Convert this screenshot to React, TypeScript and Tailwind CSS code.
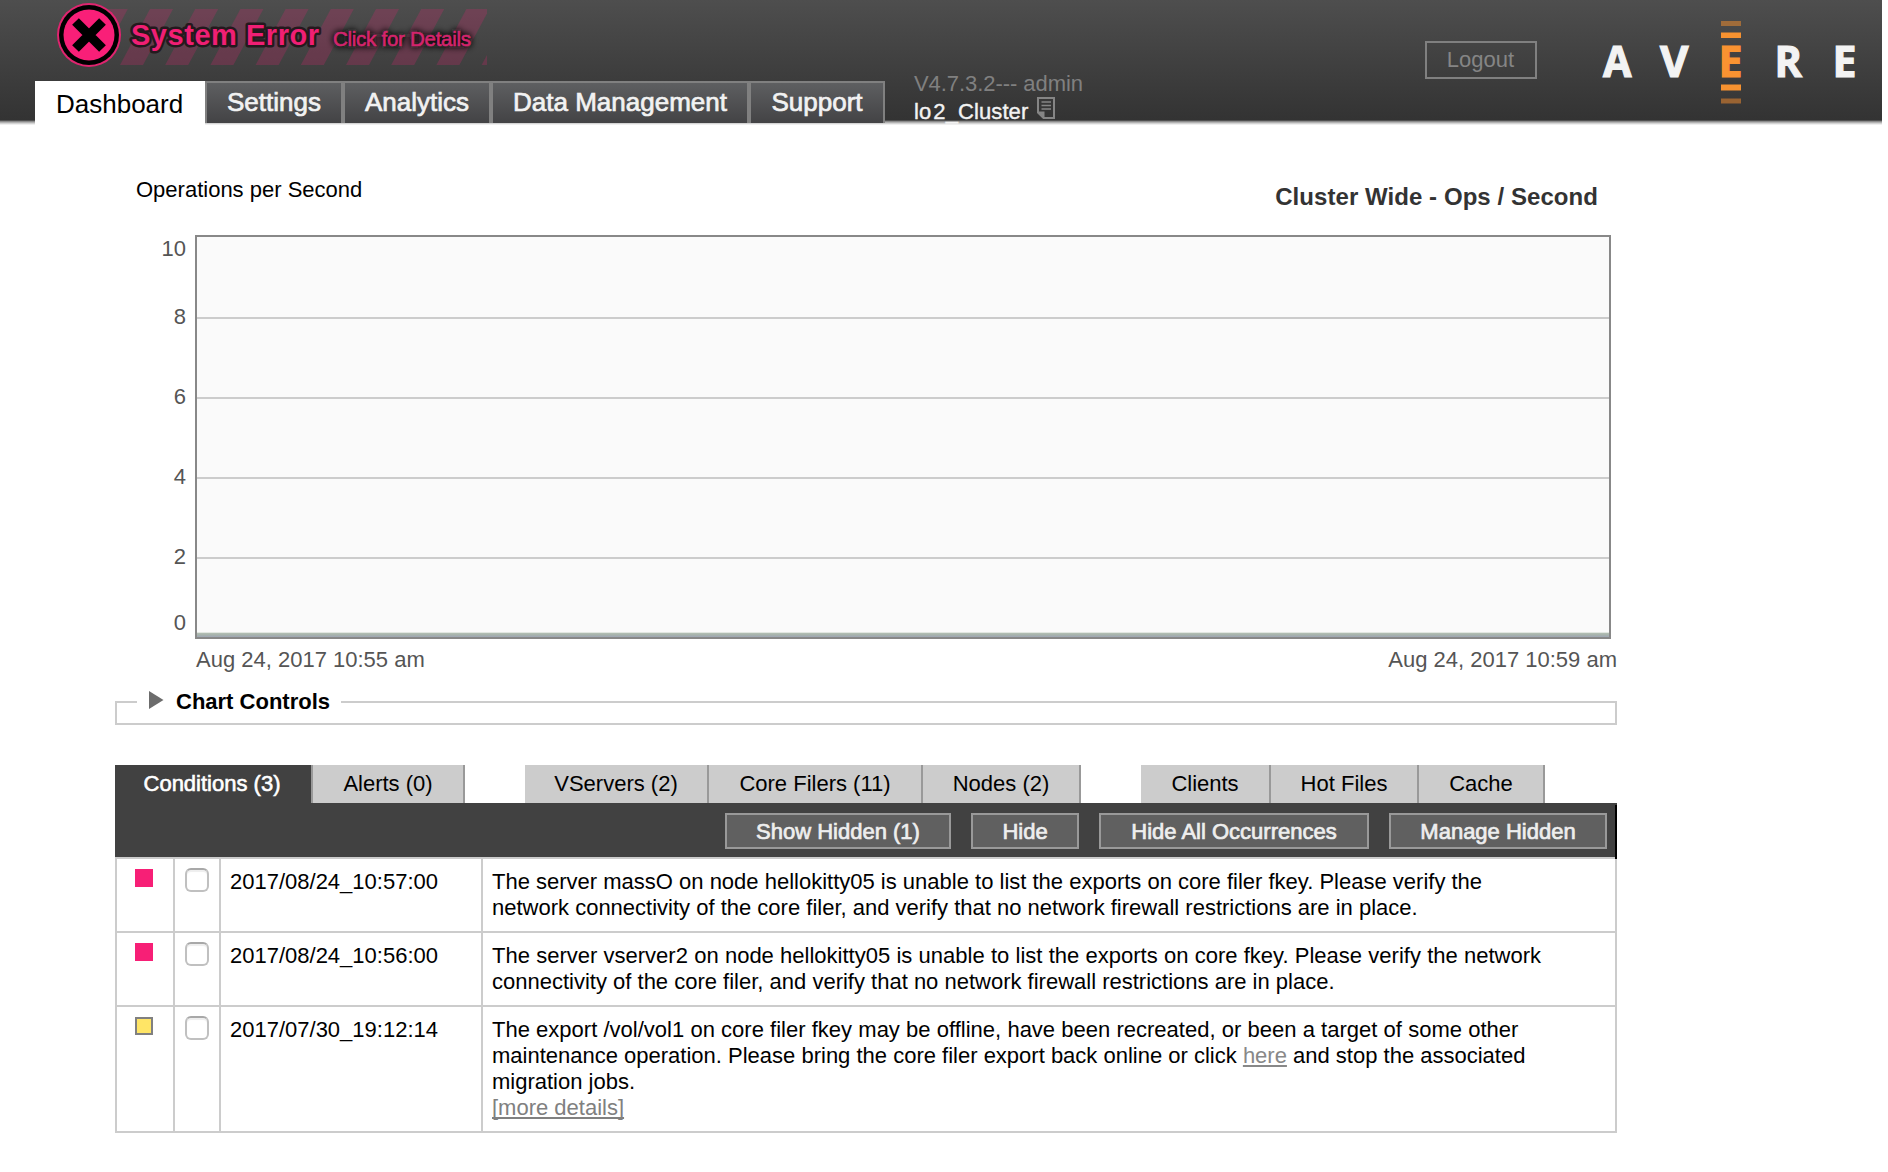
import React from "react";

const navTabs = [
  { label: "Settings", width: "w-[138px]" },
  { label: "Analytics", width: "w-[148px]" },
  { label: "Data Management", width: "w-[258px]" },
  { label: "Support", width: "w-[136px]" },
];

function ErrorBanner() {
  const stripes = [0, 1, 2, 3, 4, 5, 6, 7, 8, 9];
  return (
    <svg width="430" height="64" viewBox="57 3 430 64" className="block">
      <defs>
        <clipPath id="stripeClip">
          <rect x="100" y="9" width="387" height="56" />
        </clipPath>
        <filter id="glow" x="-20%" y="-60%" width="140%" height="220%">
          <feGaussianBlur stdDeviation="3" />
        </filter>
      </defs>
      <g clipPath="url(#stripeClip)" fill="#f91f78" fillOpacity="0.2">
        {stripes.map((i) => {
          const x = 74.8 + i * 45.2;
          return <polygon key={i} points={`${x},65 ${x + 23},65 ${x + 53},9 ${x + 30},9`} />;
        })}
      </g>
      <circle cx="89" cy="35" r="32" fill="#e0246f" />
      <circle cx="89" cy="35" r="30" fill="#000" />
      <circle cx="89" cy="35" r="25.5" fill="#f91f78" />
      <path d="M75.500 21.500 L102.500 48.500 M102.500 21.500 L75.500 48.500" stroke="#000" strokeWidth="9.500" />
      <g fontFamily="Liberation Sans, sans-serif">
        <text x="131" y="45" fontSize="29" fontWeight="700" textLength="188" fill="#f01f74" stroke="#25191e" strokeWidth="5" strokeLinejoin="round" paintOrder="stroke">System Error</text>
        <text x="333" y="46" fontSize="20.500" textLength="138" fill="#111" stroke="#111" strokeWidth="3" filter="url(#glow)" aria-hidden="true">Click for Details</text>
        <text x="333" y="46" fontSize="20.500" textLength="138" fill="#d4246d" stroke="#d4246d" strokeWidth="0.600">Click for Details</text>
      </g>
    </svg>
  );
}

function AvereLogo() {
  const letters = [
    { c: "A", x: 1603, w: 28.5 },
    { c: "V", x: 1660, w: 28.5 },
    { c: "R", x: 1774.5, w: 27.5 },
    { c: "E", x: 1832.5, w: 24 },
  ];
  return (
    <svg width="256" height="84" viewBox="1601 20 256 84" className="block">
      <g fontFamily="Open Sans, sans-serif" fontWeight="700" fontSize="43.500" fill="#f3f3f3" stroke="#f3f3f3" strokeWidth="1.200">
        {letters.map((l) => (
          <text key={l.x} x={l.x} y="76.500" textLength={l.w} lengthAdjust="spacingAndGlyphs">{l.c}</text>
        ))}
        <text x="1718.500" y="76.500" fill="#f99331" stroke="#f99331" textLength="24" lengthAdjust="spacingAndGlyphs">E</text>
      </g>
      <rect x="1721" y="21" width="20" height="5" fill="#a06c3a" />
      <rect x="1721" y="32.500" width="20" height="5.500" fill="#f79230" />
      <rect x="1721" y="84.500" width="20" height="6" fill="#f79230" />
      <rect x="1721" y="98.500" width="20" height="5" fill="#996332" />
    </svg>
  );
}

function Header() {
  return (
    <header className="flex h-[125px] w-[1882px] bg-[linear-gradient(to_bottom,#4e4e4e_0px,#333_120px,#505050_120px,#505050_121px,#8b8b8b_121px,#8b8b8b_122px,#b2b2b2_122px,#b2b2b2_123px,#d4d4d4_123px,#d4d4d4_124px,#efefef_124px)]">
      <div className="ml-[35px] w-[850px]">
        <div className="ml-[22px] h-[81px] pt-[3px]">
          <ErrorBanner />
        </div>
        <nav className="flex items-start text-[26px] leading-[30px]">
          <div className="h-[44px] w-[170px] bg-white pt-[8px] pl-[21px] text-black">Dashboard</div>
          {navTabs.map((t) => (
            <div key={t.label} className={`${t.width} h-[42px] border-2 border-b-0 border-[#808080] bg-gradient-to-b from-[#5e5f61] to-[#434345] pt-[4px] text-center whitespace-nowrap text-[#f2f2f2] [-webkit-text-stroke:0.7px_#f2f2f2]`}>
              {t.label}
            </div>
          ))}
        </nav>
      </div>
      <div className="ml-[29px] w-[300px] pt-[70px] text-[22px] leading-[27px] text-[#808080]">
        <div className="tracking-[-0.06px]">V4.7.3.2--- admin</div>
        <div className="flex items-start text-[#f2f2f2] [-webkit-text-stroke:0.4px_#f2f2f2]">
          <span className="w-[123px] pt-px tracking-[0.1px]">lo<span className="ml-[2px]">2_Cluster</span></span>
          <svg width="18" height="22" viewBox="0 0 18 22" fill="none" stroke="#858585" strokeWidth="2">
            <path d="M1 1h16v20H6.500L1 15.500z" />
            <path d="M1 15.500h5.500V21" fill="#858585" />
            <path d="M4.500 5h9.500M4.500 8.500h9.500M4.500 12h9.500" strokeWidth="1.500" />
          </svg>
        </div>
      </div>
      <button className="mt-[41px] ml-[211px] h-[38px] w-[112px] border-2 border-[#808080] pr-px text-center text-[22px] leading-[32px] text-[#858585]">Logout</button>
      <div className="mt-[20px] ml-[64px]">
        <AvereLogo />
      </div>
    </header>
  );
}

const yLabels = [
  { v: "10", h: "h-[68px]" },
  { v: "8", h: "h-[80px]" },
  { v: "6", h: "h-[80px]" },
  { v: "4", h: "h-[80px]" },
  { v: "2", h: "h-[66px]" },
  { v: "0", h: "h-[26px]" },
];

function Chart() {
  return (
    <section className="w-[1502px] text-[22px]">
      <div className="flex h-[110px] justify-between pt-[52px] pr-[19px] pl-[21px]">
        <h2 className="leading-[26px]">Operations per Second</h2>
        <h1 className="mt-[6px] text-[24px] leading-[28px] font-bold tracking-[0.06px] text-[#333]">Cluster Wide - Ops / Second</h1>
      </div>
      <div className="flex h-[404px]">
        <div className="w-[80px] pt-px pr-[9px] text-right leading-[26px] text-[#555]">
          {yLabels.map((l) => (
            <div key={l.v} className={l.h}>{l.v}</div>
          ))}
        </div>
        <div className="h-[404px] w-[1416px] border-2 border-[#888] bg-[#fafafa]">
          <div className="h-[80px]" />
          <div className="h-[80px] border-t-2 border-[#ccc]" />
          <div className="h-[80px] border-t-2 border-[#ccc]" />
          <div className="h-[80px] border-t-2 border-[#ccc]" />
          <div className="h-[75px] border-t-2 border-[#ccc]" />
          <div className="h-[5px] bg-[linear-gradient(to_bottom,#e2e7e2_0px,#e2e7e2_1px,#b4c0b4_1px,#a6b2ac_3px,#a0a8b6_5px)]" />
        </div>
      </div>
      <div className="flex justify-between pt-[8px] pl-[81px] leading-[26px] text-[#555]">
        <span>Aug 24, 2017 10:55 am</span>
        <span>Aug 24, 2017 10:59 am</span>
      </div>
    </section>
  );
}

function ChartControls() {
  return (
    <div className="mt-[15px] w-[1502px]">
      <div className="flex h-[26px] items-start">
        <div className="mt-[13px] h-[13px] w-[22px] border-t-2 border-l-2 border-[#ccc]" />
        <div className="flex w-[204px] pl-[12px]">
          <svg width="15" height="18" viewBox="0 0 15 18" className="mt-[3px]">
            <path d="M0 0L14.500 9L0 18z" fill="#6c6c6c" />
          </svg>
          <span className="mt-px ml-[12px] text-[22px] leading-[26px] font-bold whitespace-nowrap">Chart Controls</span>
        </div>
        <div className="mt-[13px] h-[13px] flex-1 border-t-2 border-r-2 border-[#ccc]" />
      </div>
      <div className="h-[11px] border-2 border-t-0 border-[#ccc]" />
    </div>
  );
}

const rows = [
  {
    color: "bg-[#f71f76]",
    height: "h-[74px]",
    date: "2017/08/24_10:57:00",
    body: (
      <>
        The server massO on node hellokitty05 is unable to list the exports on core filer fkey. Please verify the
        <br />
        network connectivity of the core filer, and verify that no network firewall restrictions are in place.
      </>
    ),
  },
  {
    color: "bg-[#f71f76]",
    height: "h-[74px]",
    date: "2017/08/24_10:56:00",
    body: (
      <>
        <span className="[word-spacing:0.15px]">The server vserver2 on node hellokitty05 is unable to list the exports on core fkey. Please verify the network</span>
        <br />
        connectivity of the core filer, and verify that no network firewall restrictions are in place.
      </>
    ),
  },
  {
    color: "border-2 border-[#808080] bg-[#ffe566]",
    height: "h-[126px]",
    date: "2017/07/30_19:12:14",
    body: (
      <>
        <span className="[word-spacing:0.1px]">The export /vol/vol1 on core filer fkey may be offline, have been recreated, or been a target of some other</span>
        <br />
        maintenance operation. Please bring the core filer export back online or click{" "}
        <a className="text-[#888] underline decoration-2 underline-offset-[2px]">here</a> and stop the associated
        <br />
        migration jobs.
        <br />
        <a className="text-[#808080] underline decoration-2 underline-offset-[2px] [text-decoration-skip-ink:none]">[more details]</a>
      </>
    ),
  },
];

const tabs = [
  { label: "Alerts (0)", cls: "w-[154px] border-l-2" },
  { label: "VServers (2)", cls: "ml-[60px] w-[184px]" },
  { label: "Core Filers (11)", cls: "w-[214px]" },
  { label: "Nodes (2)", cls: "w-[158px]" },
  { label: "Clients", cls: "ml-[60px] w-[130px]" },
  { label: "Hot Files", cls: "w-[148px]" },
  { label: "Cache", cls: "w-[126px]" },
];

const actions = [
  { label: "Show Hidden (1)", cls: "w-[226px]" },
  { label: "Hide", cls: "w-[108px]" },
  { label: "Hide All Occurrences", cls: "w-[270px]" },
  { label: "Manage Hidden", cls: "w-[218px]" },
];

function Conditions() {
  return (
    <section className="mt-[40px] w-[1502px] text-[22px]">
      <div className="flex h-[38px] text-center leading-[37px] whitespace-nowrap">
        <div className="w-[196px] bg-[#414141] pr-[2px] text-white [-webkit-text-stroke:0.6px_#fff]">Conditions (3)</div>
        {tabs.map((t) => (
          <div key={t.label} className={`${t.cls} border-r-2 border-[#999] bg-[#ccc]`}>{t.label}</div>
        ))}
      </div>
      <div className="h-[2px] bg-[#414141]" />
      <div className="flex h-[52px] justify-end gap-[20px] border-r-2 border-black bg-[#414141] pt-[8px] pr-[8px]">
        {actions.map((a) => (
          <button key={a.label} className={`${a.cls} h-[36px] border-2 border-[#999] bg-[#606060] pt-px text-center leading-[31px] whitespace-nowrap text-[#eee] [-webkit-text-stroke:0.7px_#eee]`}>
            {a.label}
          </button>
        ))}
      </div>
      <div className="flex">
        <div className="h-[2px] flex-1 bg-[#ccc]" />
        <div className="h-[2px] w-[2px] bg-black" />
      </div>
      <div className="border-l-2 border-[#ccc]">
        {rows.map((r) => (
          <div key={r.date} className={`${r.height} flex border-b-2 border-[#ccc] leading-[26px]`}>
            <div className="w-[58px] border-r-2 border-[#ccc] pt-[10px] pl-[18px]">
              <div className={`${r.color} size-[18px]`} />
            </div>
            <div className="w-[46px] border-r-2 border-[#ccc] pt-[9px] pl-[10px]">
              <div className="size-[24px] rounded-[6px] border-2 border-[#c0c0c0] border-t-[#a8a8a8] bg-white shadow-[inset_0_2px_1px_#eee]" />
            </div>
            <div className="w-[262px] border-r-2 border-[#ccc] pt-[10px] pl-[9px]">{r.date}</div>
            <div className="flex-1 border-r-2 border-[#ccc] pt-[10px] pl-[9px] whitespace-nowrap">{r.body}</div>
          </div>
        ))}
      </div>
    </section>
  );
}

export default function App() {
  return (
    <div className="h-[1172px] w-full overflow-hidden bg-white font-['Liberation_Sans',Arial,sans-serif] text-black">
      <Header />
      <main className="ml-[115px]">
        <Chart />
        <ChartControls />
        <Conditions />
      </main>
    </div>
  );
}
